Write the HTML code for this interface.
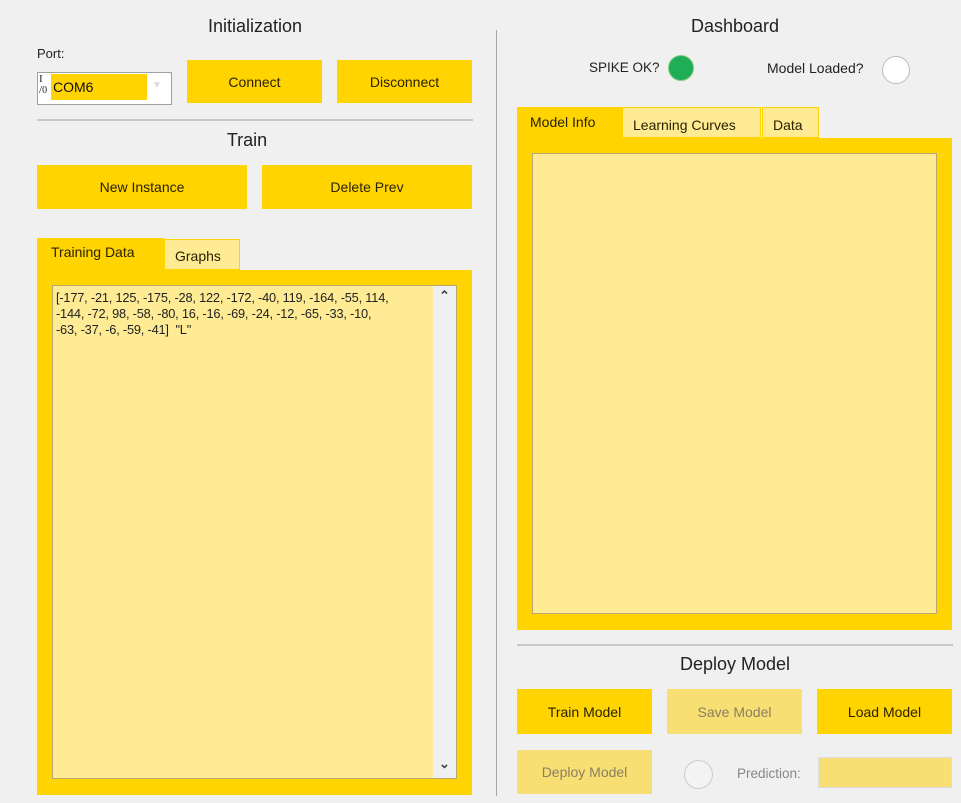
<!DOCTYPE html>
<html><head><style>
body{margin:0;width:961px;height:803px;background:#f0f0f0;position:relative;overflow:hidden;font-family:"Liberation Sans",sans-serif;color:#222}
.a{position:absolute}
.b{position:absolute;background:#ffd400;display:flex;align-items:center;justify-content:center;font-size:14px;color:#2a2200}
.d{background:#f7df74;color:#8a8060}
.t{position:absolute;font-size:18px;color:#222;text-align:center}
.ln{position:absolute;height:2px;background:#c8c8c8}
.circ{position:absolute;border-radius:50%;border:1px solid #bbb}
</style></head><body>
<div class="t" style="left:37px;width:436px;top:16px">Initialization</div>
<div class="a" style="left:37px;top:46px;font-size:13px">Port:</div>
<div class="a" style="left:37px;top:72px;width:133px;height:31px;background:#fff;border:1px solid #a0a0a0"></div>
<div class="a" style="left:39px;top:74px;font-size:11px;font-family:'Liberation Serif',serif;line-height:11px">I<br>/<span style="font-size:10px">0</span></div>
<div class="a" style="left:51px;top:74px;width:96px;height:26px;background:#ffd400;font-size:14px;line-height:26px;padding-left:2px;box-sizing:border-box;color:#111">COM6</div>
<div class="a" style="left:152px;top:80px;color:#ddd;font-size:10px">&#9660;</div>
<div class="b" style="left:187px;top:60px;width:135px;height:43px">Connect</div>
<div class="b" style="left:337px;top:60px;width:135px;height:43px">Disconnect</div>
<div class="ln" style="left:37px;top:119px;width:436px"></div>
<div class="t" style="left:37px;width:420px;top:130px">Train</div>
<div class="b" style="left:37px;top:165px;width:210px;height:44px">New Instance</div>
<div class="b" style="left:262px;top:165px;width:210px;height:44px">Delete Prev</div>
<div class="a" style="left:37px;top:238px;width:127px;height:33px;background:#ffd400;font-size:14px;padding:6px 0 0 14px;box-sizing:border-box;color:#2a2200">Training Data</div>
<div class="a" style="left:164px;top:239px;width:76px;height:31px;background:#ffeb94;border:1px solid #ffd400;box-sizing:border-box;font-size:14px;padding:8px 0 0 10px;color:#2a2200">Graphs</div>
<div class="a" style="left:37px;top:270px;width:435px;height:525px;background:#ffd400"></div>
<div class="a" style="left:52px;top:285px;width:405px;height:494px;background:#ffeb94;border:1px solid #b8a870;box-sizing:border-box"></div>
<div class="a" style="left:433px;top:286px;width:23px;height:492px;background:#f0f0f0"></div>
<div class="a" style="left:439px;top:288px;font-size:13px;color:#444;font-weight:bold">&#8963;</div>
<div class="a" style="left:439px;top:756px;font-size:13px;color:#444;font-weight:bold">&#8964;</div>
<div class="a" style="left:56px;top:290px;font-size:12.8px;line-height:16px;color:#222;width:380px;letter-spacing:-0.2px;white-space:nowrap">[-177, -21, 125, -175, -28, 122, -172, -40, 119, -164, -55, 114,<br>-144, -72, 98, -58, -80, 16, -16, -69, -24, -12, -65, -33, -10,<br>-63, -37, -6, -59, -41]&nbsp; "L"</div>

<div class="a" style="left:496px;top:30px;width:1px;height:766px;background:#a8a8a8"></div>

<div class="t" style="left:517px;width:436px;top:16px">Dashboard</div>
<div class="a" style="left:589px;top:60px;font-size:13.5px">SPIKE OK?</div>
<div class="circ" style="left:668px;top:55px;width:24px;height:24px;background:#1fad55;border-color:#8c8"></div>
<div class="a" style="left:767px;top:60px;font-size:14px">Model Loaded?</div>
<div class="circ" style="left:882px;top:56px;width:26px;height:26px;background:#fff"></div>
<div class="a" style="left:517px;top:107px;width:105px;height:32px;background:#ffd400;font-size:14px;padding:7px 0 0 13px;box-sizing:border-box;color:#2a2200">Model Info</div>
<div class="a" style="left:622px;top:107px;width:139px;height:31px;background:#ffeb94;border:1px solid #ffd400;box-sizing:border-box;font-size:14px;padding:9px 0 0 10px;color:#2a2200">Learning Curves</div>
<div class="a" style="left:762px;top:107px;width:57px;height:31px;background:#ffeb94;border:1px solid #ffd400;box-sizing:border-box;font-size:14px;padding:9px 0 0 10px;color:#2a2200">Data</div>
<div class="a" style="left:517px;top:138px;width:435px;height:492px;background:#ffd400"></div>
<div class="a" style="left:532px;top:153px;width:405px;height:461px;background:#ffeb94;border:1px solid #b8a870;box-sizing:border-box"></div>
<div class="ln" style="left:517px;top:644px;width:436px"></div>
<div class="t" style="left:517px;width:436px;top:654px">Deploy Model</div>
<div class="b" style="left:517px;top:689px;width:135px;height:45px">Train Model</div>
<div class="b d" style="left:667px;top:689px;width:135px;height:45px">Save Model</div>
<div class="b" style="left:817px;top:689px;width:135px;height:45px">Load Model</div>
<div class="b d" style="left:517px;top:750px;width:135px;height:44px">Deploy Model</div>
<div class="circ" style="left:684px;top:760px;width:27px;height:27px;background:#f3f3f3;border-color:#ccc"></div>
<div class="a" style="left:737px;top:766px;font-size:13.5px;color:#888">Prediction:</div>
<div class="a" style="left:818px;top:757px;width:134px;height:31px;background:#f7df74;border:1px solid #ddd;box-sizing:border-box"></div>
</body></html>
